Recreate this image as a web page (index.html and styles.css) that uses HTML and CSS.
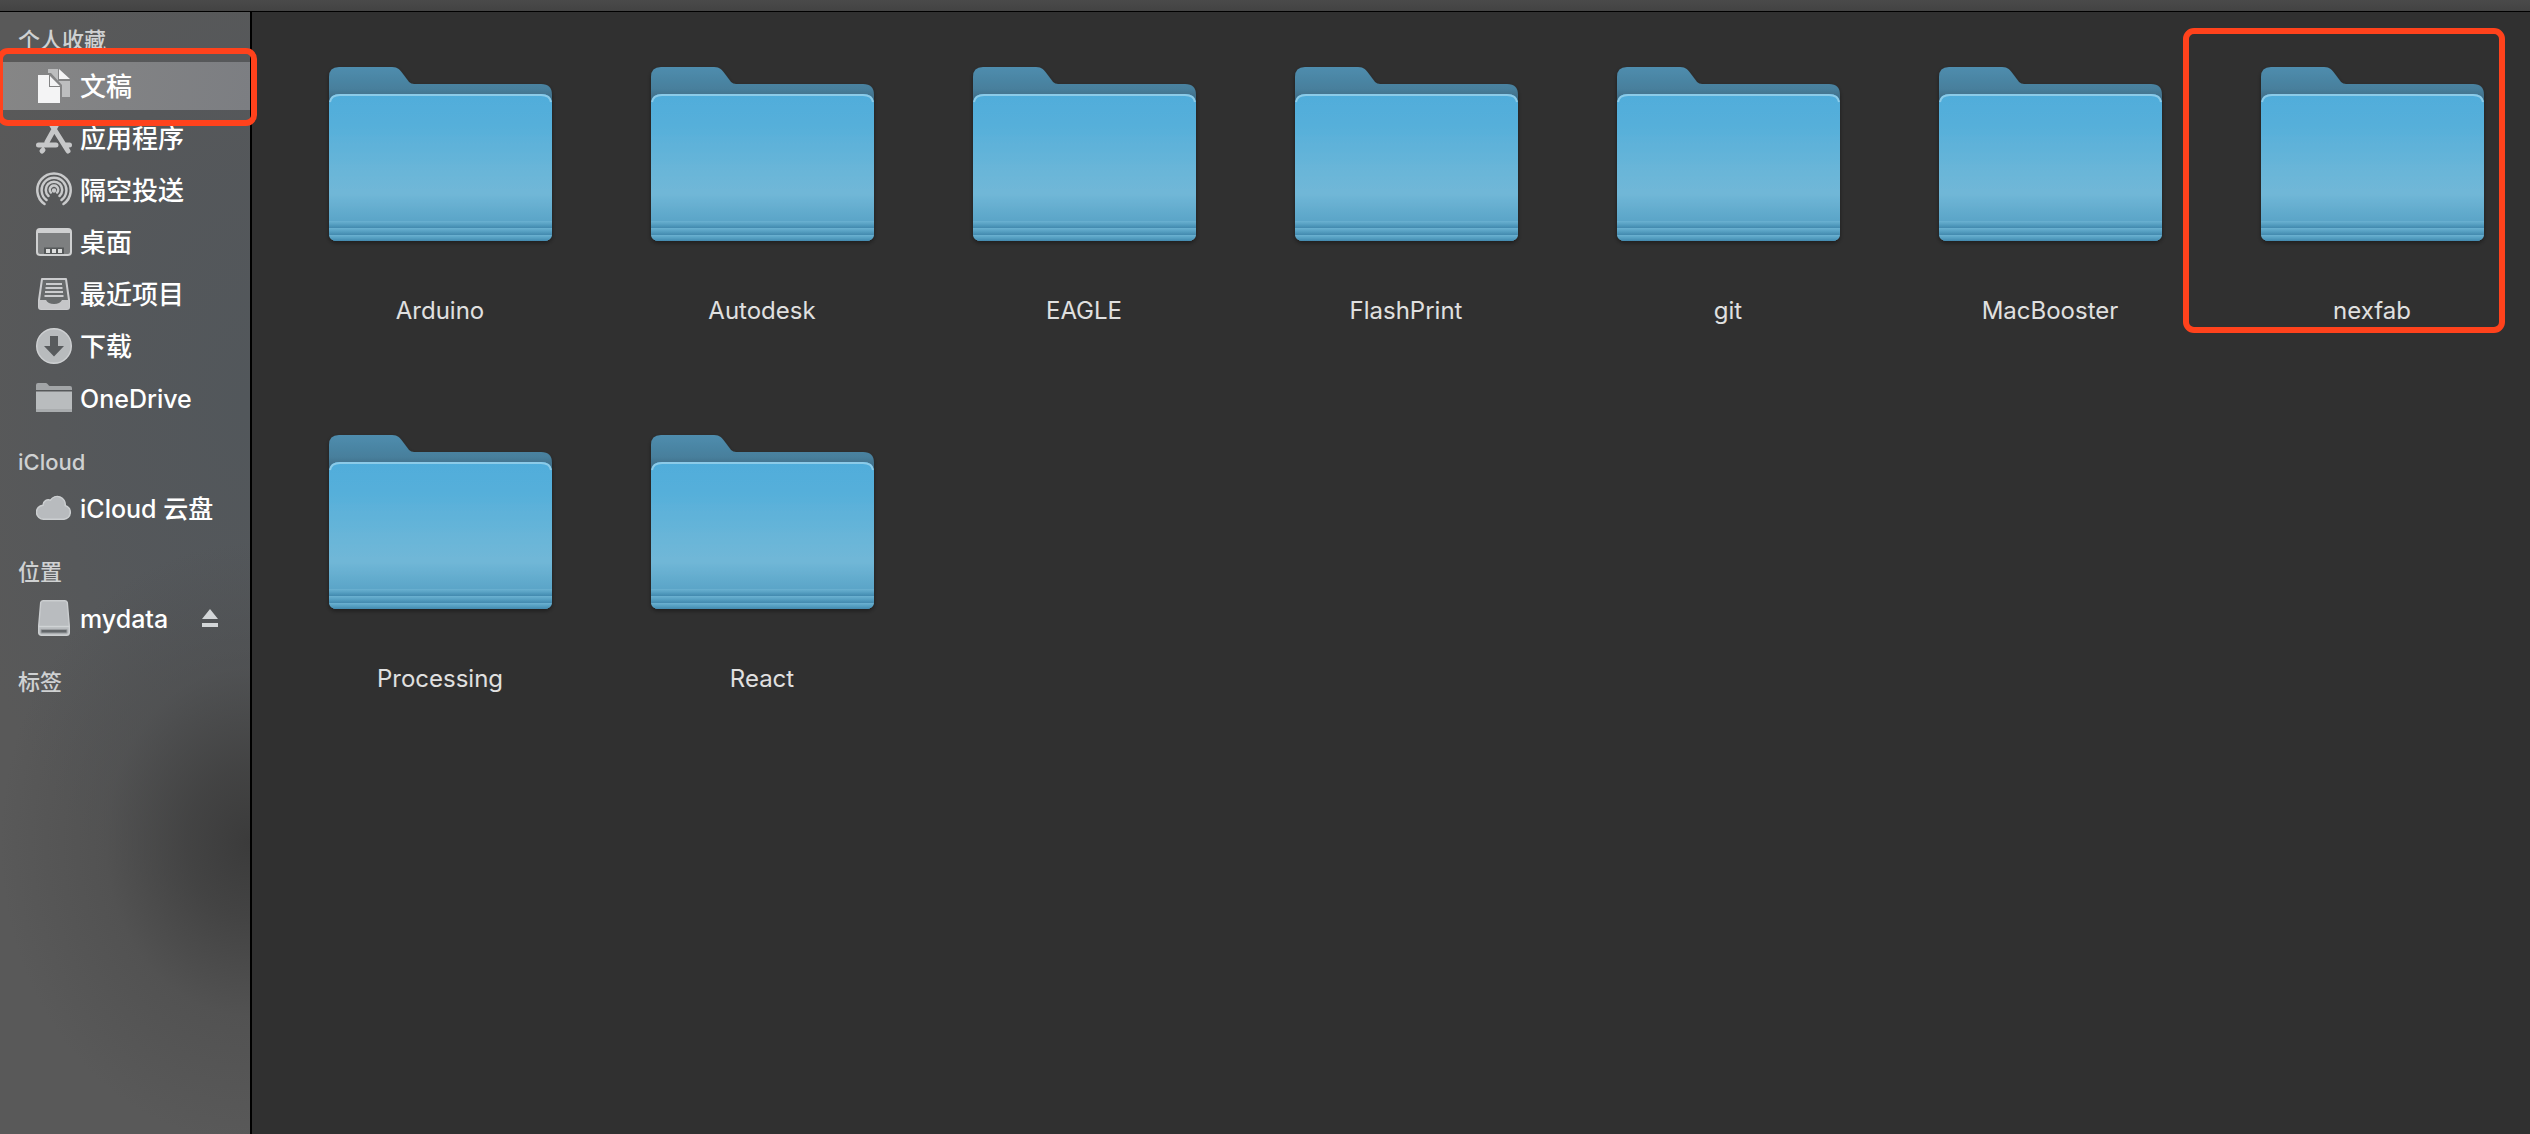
FILE: index.html
```html
<!DOCTYPE html>
<html lang="zh-CN">
<head>
<meta charset="utf-8">
<title>文稿</title>
<link rel="stylesheet" href="styles.css">
</head>
<body>
<svg class="defs" aria-hidden="true">
  <defs>
    <linearGradient id="back" x1="0" y1="0" x2="0" y2="1">
      <stop offset="0" stop-color="#4f8dae"/>
      <stop offset=".5" stop-color="#477f9c"/>
      <stop offset=".85" stop-color="#3c6178"/>
    </linearGradient>
    <linearGradient id="front" x1="0" y1="0" x2="0" y2="1">
      <stop offset="0" stop-color="#50addb"/>
      <stop offset=".2" stop-color="#55afda"/>
      <stop offset=".55" stop-color="#6bb6d8"/>
      <stop offset=".68" stop-color="#70b7d7"/>
      <stop offset=".86" stop-color="#5ba5c8"/>
      <stop offset="1" stop-color="#5ba5c8"/>
    </linearGradient>
    <linearGradient id="fold" x1="0" y1="0" x2="0" y2="1">
      <stop offset="0" stop-color="#6bb1d1"/>
      <stop offset=".4" stop-color="#5aa3c5"/>
      <stop offset="1" stop-color="#4289ae"/>
    </linearGradient>
    <filter id="shade" x="-5%" y="-5%" width="110%" height="112%">
      <feDropShadow dx="0" dy="2" stdDeviation="2" flood-color="#000" flood-opacity=".4"/>
    </filter>
    <symbol id="folder" viewBox="0 0 256 256">
      <g filter="url(#shade)">
        <path fill="url(#back)" d="M17 85V51q0-10 10-10h53c6 0 8 3 11 7l6 8q2 2 5 2h127q11 0 11 11v16z"/>
        <path fill="url(#front)" d="M17 78q0-10 11-10h201q11 0 11 10v129q0 8-8 8H25q-8 0-8-8z"/>
        <path fill="url(#fold)" d="M17 195h223v7H17z"/>
        <path fill="url(#fold)" d="M17 202h223v5q0 2-1 2H18q-1 0-1-2z"/>
        <path fill="url(#fold)" d="M17 209h223q-2 6-8 6H25q-6 0-8-6z"/>
      </g>
      <path fill="none" stroke="#8ccbe8" stroke-width="2" d="M18 76q1-7 10-7h201q9 0 10 7"/>
    </symbol>
  </defs>
</svg>
<div class="window">
  <header class="toolbar"></header>
  <div class="panes">
    <nav class="sidebar" aria-label="边栏">
      <h2 class="group">个人收藏</h2>
      <ul class="places">
        <li><a class="place selected" href="#documents" aria-current="page">
          <svg class="icon" viewBox="0 0 36 36"><path fill="#bdbebf" d="M12 1h10v12h12v16h-8V17L15 5h-3z"/><path fill="#f4f4f5" d="M23 1v10h11zM2 7h11v12h11v16H2zM14 8l10 10H14z"/></svg>
          <span class="name">文稿</span></a></li>
        <li><a class="place" href="#applications">
          <svg class="icon" viewBox="0 0 36 36"><g fill="none" stroke="#c6c7c8" stroke-width="5" stroke-linecap="round"><path d="M21 4L11 22M15 4l17 27M7 30l-1 1M2.500 25H20M29 25h4.500"/></g></svg>
          <span class="name">应用程序</span></a></li>
        <li><a class="place" href="#airdrop">
          <svg class="icon" viewBox="0 0 36 36"><g fill="none" stroke="#c9cacb" stroke-width="2.500" stroke-linecap="round"><path d="M8.500 32A16.700 16.700 0 1 1 27.500 32M10.500 28A12.400 12.400 0 1 1 25.500 28M12.500 24A8.200 8.200 0 1 1 23.500 24M14.800 20.500A4.200 4.200 0 1 1 21.200 20.500"/></g><circle cx="18" cy="18.500" r="2.200" fill="#c9cacb"/></svg>
          <span class="name">隔空投送</span></a></li>
        <li><a class="place" href="#desktop">
          <svg class="icon" viewBox="0 0 36 36"><rect x="1" y="5" width="34" height="26" rx="3" fill="#7d7f80" stroke="#cfd0d1" stroke-width="2"/><path fill="#cfd0d1" d="M1 9V7q0-2 2-2h30q2 0 2 2v2z"/><path fill="#555859" d="M8 23.500h20V30H8z"/><path fill="#dcdddd" d="M10 25h4v4h-4zM16 25h4v4h-4zM22 25h4v4h-4z"/></svg>
          <span class="name">桌面</span></a></li>
        <li><a class="place" href="#recents">
          <svg class="icon" viewBox="0 0 36 36"><path fill="#686b6c" stroke="#cbccce" stroke-width="2" stroke-linejoin="round" d="M6 3h24l3 21v7q0 2-2 2H5q-2 0-2-2v-7z"/><path fill="#c5c6c8" d="M3 24h7q2 4 8 4t8-4h7v7q0 2-2 2H5q-2 0-2-2z"/><path stroke="#cbccce" stroke-width="2" d="M10 8h16M9.500 12h17M9 16h18M8.500 20h19"/></svg>
          <span class="name">最近项目</span></a></li>
        <li><a class="place" href="#downloads">
          <svg class="icon" viewBox="0 0 36 36"><circle cx="18" cy="18" r="17.300" fill="#b8bbbd" stroke="#ced0d2" stroke-width="1.400"/><path fill="#585b5d" d="M14 8h8v10h6L18 28.500 8 18h6z"/></svg>
          <span class="name">下载</span></a></li>
        <li><a class="place" href="#onedrive">
          <svg class="icon" viewBox="0 0 36 36"><path fill="#a2a5a7" d="M0 10V5q0-2 2-2h8q1 0 2 1.500T14 6h20q2 0 2 2v2z"/><path fill="#b9bcbe" d="M0 11.500h36V31q0 1-1 1H1q-1 0-1-1z"/><path fill="#a9acae" d="M0 29h36v2q0 1-1 1H1q-1 0-1-1z"/></svg>
          <span class="name latin">OneDrive</span></a></li>
      </ul>
      <h2 class="group">iCloud</h2>
      <ul class="places">
        <li><a class="place" href="#icloud">
          <svg class="icon" viewBox="0 0 36 36"><path fill="#b8bbbe" stroke="#cccfd1" stroke-width="1.500" d="M8 29.200a7 7 0 0 1-1-14 5.500 5.500 0 0 1 7.500-5A8 8 0 0 1 29.200 15.500 7 7 0 0 1 28 29.200z"/></svg>
          <span class="name latin">iCloud 云盘</span></a></li>
      </ul>
      <h2 class="group">位置</h2>
      <ul class="places">
        <li class="volume"><a class="place" href="#mydata">
          <svg class="icon" viewBox="0 0 36 36"><path fill="#b9bcbf" stroke="#cbced0" stroke-width="1.400" d="M7 .7h22q2 0 2.300 2L33.300 26v6.500q0 2.800-2.800 2.800h-25q-2.800 0-2.800-2.800V26L4.700 2.700q.3-2 2.300-2z"/><path stroke="#d0d3d5" stroke-width="1.400" d="M3 26.500h30"/><path fill="#63676a" stroke="#9b9ea1" d="M5 29.500h26V33H5z"/></svg>
          <span class="name latin">mydata</span></a>
          <button class="eject" type="button" aria-label="推出 mydata"><svg class="eject-icon" viewBox="0 0 16 18"><path fill="#d3d6d8" d="M8 0l8 10H0zM0 14h16v4H0z"/></svg></button></li>
      </ul>
      <h2 class="group">标签</h2>
    </nav>
    <main class="files">
      <a class="file" href="#arduino"><svg class="file-icon"><use href="#folder"/></svg><span>Arduino</span></a>
      <a class="file" href="#autodesk"><svg class="file-icon"><use href="#folder"/></svg><span>Autodesk</span></a>
      <a class="file" href="#eagle"><svg class="file-icon"><use href="#folder"/></svg><span>EAGLE</span></a>
      <a class="file" href="#flashprint"><svg class="file-icon"><use href="#folder"/></svg><span>FlashPrint</span></a>
      <a class="file" href="#git"><svg class="file-icon"><use href="#folder"/></svg><span>git</span></a>
      <a class="file" href="#macbooster"><svg class="file-icon"><use href="#folder"/></svg><span>MacBooster</span></a>
      <a class="file marked" href="#nexfab"><svg class="file-icon"><use href="#folder"/></svg><span>nexfab</span></a>
      <a class="file" href="#processing"><svg class="file-icon"><use href="#folder"/></svg><span>Processing</span></a>
      <a class="file" href="#react"><svg class="file-icon"><use href="#folder"/></svg><span>React</span></a>
    </main>
  </div>
</div>
</body>
</html>
```
FILE: styles.css
```css
* {
  box-sizing: border-box;
}

body {
  margin: 0;
  background: #303030;
  color: #fff;
  font-family: Inter, "Noto Sans CJK SC", sans-serif;
}

a {
  color: inherit;
  text-decoration: none;
}

.defs {
  position: absolute;
  width: 0;
  height: 0;
}

.window {
  display: flex;
  flex-direction: column;
  min-height: 100vh;
}

.toolbar {
  height: 12px;
  background: linear-gradient(#4a4a4a, #434343);
  border-bottom: 1px solid #000;
}

.panes {
  display: flex;
  flex: 1;
}

.sidebar {
  flex: none;
  width: 252px;
  border-right: 2px solid #000;
  background:
    radial-gradient(250px 300px at 100% 74%, #3b3b3b 0%, rgba(62, 62, 62, .8) 25%, rgba(72, 72, 72, .4) 58%, rgba(88, 88, 88, 0) 100%),
    radial-gradient(300px 520px at 100% 35%, #52575b 0%, rgba(83, 87, 91, .8) 45%, rgba(88, 88, 88, 0) 100%),
    #595959;
}

.group {
  margin: 18px 0 0;
  padding-left: 18px;
  color: #cfd1d2;
  font-size: 22px;
  font-weight: 500;
  line-height: 40px;
}

.group:first-child {
  margin-top: 8px;
}

.places {
  margin: 0;
  padding: 0;
  list-style: none;
}

.place {
  display: flex;
  flex: 1;
  align-items: center;
  gap: 8px;
  height: 48px;
  margin: 2px 0;
  padding-left: 36px;
  font-size: 26px;
  font-weight: 500;
  line-height: 36px;
  white-space: nowrap;
}

.name {
  padding-top: 2px;
}

.latin {
  font-size: 25px;
}

.places li {
  display: flex;
}

.selected {
  position: relative;
  background: linear-gradient(100deg, #868686, #7c7e82);
}

.selected::after {
  content: "";
  position: absolute;
  inset: -14px -7px -16px -3px;
  border: 6px solid #ff421c;
  border-radius: 11px;
}

.icon {
  flex: none;
  width: 36px;
  height: 36px;
}

.volume {
  align-items: center;
  padding-right: 32px;
}

.eject {
  display: flex;
  padding: 0;
  border: 0;
  background: none;
}

.eject-icon {
  width: 16px;
  height: 18px;
}

.files {
  flex: 1;
  display: grid;
  grid-template-columns: repeat(auto-fill, 256px);
  align-content: start;
  gap: 68px 66px;
  padding: 14px 24px 24px 60px;
}

.file {
  position: relative;
  display: flex;
  flex-direction: column;
  align-items: center;
  gap: 14px;
  color: #e0e0e0;
  font-size: 24px;
  line-height: 30px;
}

.file-icon {
  width: 256px;
  height: 256px;
}

.marked::after {
  content: "";
  position: absolute;
  inset: 2px -5px -7px -61px;
  border: 6px solid #ff421c;
  border-radius: 11px;
}
```
